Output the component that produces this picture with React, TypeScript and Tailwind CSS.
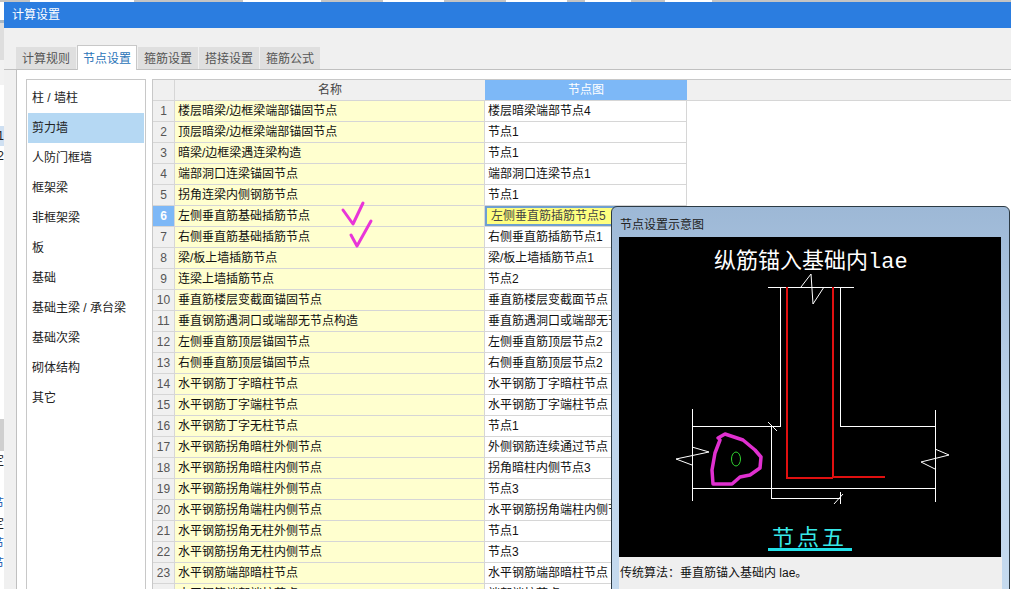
const SIDE_ITEMS = ['柱 / 墙柱', '剪力墙', '人防门框墙', '框架梁', '非框架梁', '板', '基础', '基础主梁 / 承台梁', '基础次梁', '砌体结构', '其它'];

const TABS = ['计算规则', '节点设置', '箍筋设置', '搭接设置', '箍筋公式'];

const ROWS = [
  ['楼层暗梁/边框梁端部锚固节点', '楼层暗梁端部节点4'],
  ['顶层暗梁/边框梁端部锚固节点', '节点1'],
  ['暗梁/边框梁遇连梁构造', '节点1'],
  ['端部洞口连梁锚固节点', '端部洞口连梁节点1'],
  ['拐角连梁内侧钢筋节点', '节点1'],
  ['左侧垂直筋基础插筋节点', '左侧垂直筋插筋节点5'],
  ['右侧垂直筋基础插筋节点', '右侧垂直筋插筋节点1'],
  ['梁/板上墙插筋节点', '梁/板上墙插筋节点1'],
  ['连梁上墙插筋节点', '节点2'],
  ['垂直筋楼层变截面锚固节点', '垂直筋楼层变截面节点'],
  ['垂直钢筋遇洞口或端部无节点构造', '垂直筋遇洞口或端部无节点'],
  ['左侧垂直筋顶层锚固节点', '左侧垂直筋顶层节点2'],
  ['右侧垂直筋顶层锚固节点', '右侧垂直筋顶层节点2'],
  ['水平钢筋丁字暗柱节点', '水平钢筋丁字暗柱节点'],
  ['水平钢筋丁字端柱节点', '水平钢筋丁字端柱节点'],
  ['水平钢筋丁字无柱节点', '节点1'],
  ['水平钢筋拐角暗柱外侧节点', '外侧钢筋连续通过节点'],
  ['水平钢筋拐角暗柱内侧节点', '拐角暗柱内侧节点3'],
  ['水平钢筋拐角端柱外侧节点', '节点3'],
  ['水平钢筋拐角端柱内侧节点', '水平钢筋拐角端柱内侧节点'],
  ['水平钢筋拐角无柱外侧节点', '节点1'],
  ['水平钢筋拐角无柱内侧节点', '节点3'],
  ['水平钢筋端部暗柱节点', '水平钢筋端部暗柱节点'],
  ['水平钢筋端部端柱节点', '端部端柱节点'],
];

// white construction lines of the drawing, in page coordinates
const WHITE_LINES = [
  '768,287 854,287',
  '780,287 780,426 692,426',
  '840,287 840,426 935,426',
  '692,409 692,501',
  '935,410 935,502',
  '692,488 935,488',
  '771,426 771,498 840,498',
  '840,492 840,504',
];

const WHITE_DIAGONALS = [
  '801,287 811,274 813,304 824,287',
  '768,422 777,431',
  '834,504 843,494',
  '692,447 709,452 676,459 692,465',
  '935,449 949,455 921,462 935,469',
];

function Diagram() {
  return (
    <svg viewBox="619 237 382 320" className="block w-[382px] h-[320px] bg-black shrink-0">
      <text x="714" y="268" className="fill-white text-[22px] font-['Liberation_Mono','Noto_Sans_CJK_SC',monospace]">纵筋锚入基础内lae</text>
      {WHITE_LINES.map((p) => (
        <polyline key={p} points={p} fill="none" stroke="#ffffff" strokeWidth="1" shapeRendering="crispEdges" />
      ))}
      {WHITE_DIAGONALS.map((p) => (
        <polyline key={p} points={p} fill="none" stroke="#ffffff" strokeWidth="1" />
      ))}
      <polyline points="787,287 787,478 833,478" fill="none" stroke="#e01010" strokeWidth="2" shapeRendering="crispEdges" />
      <polyline points="833,287 833,477 885,477" fill="none" stroke="#e01010" strokeWidth="2" shapeRendering="crispEdges" />
      <ellipse cx="736" cy="459" rx="4.5" ry="7" fill="none" stroke="#30d030" strokeWidth="1" />
      <path d="M718 438 L725 434 L743 440 L755 450 L761 457 L760 468 L750 475 L740 477 L732 484 L713 484 L712 470 L715 453 L720 440" fill="none" stroke="#e030d0" strokeWidth="3.5" strokeLinejoin="round" strokeLinecap="round" />
      <text x="772" y="545" letterSpacing="3" className="fill-[#38e8e8] text-[22px] font-['Noto_Sans_CJK_SC',sans-serif]">节点五</text>
      <rect x="768" y="548" width="84" height="3" fill="#20e0e8" />
    </svg>
  );
}

function NodePopup() {
  return (
    <div className="absolute left-[611px] top-[206px] w-[399px] h-[400px] rounded-t-[6px] border border-[#2c3a44] bg-gradient-to-b from-[#9db8d6] via-[#bcd3ea] to-[#c6dbef] px-[7px] flex flex-col">
      <div className="h-[30px] shrink-0 flex items-center pl-px pt-[6px] text-[#222222]">节点设置示意图</div>
      <Diagram />
      <div className="flex-1 bg-[#efefef] pl-px pt-[10px] text-[#111111]">传统算法：垂直筋锚入基础内 lae。</div>
    </div>
  );
}

function CheckMarks() {
  return (
    <svg viewBox="0 0 40 50" className="absolute left-[340px] top-[200px] w-[40px] h-[50px] pointer-events-none">
      <polyline points="3,10 13,24 23,3" fill="none" stroke="#e835d8" strokeWidth="3" strokeLinecap="round" strokeLinejoin="round" />
      <polyline points="11,35 17,46 31,21" fill="none" stroke="#e835d8" strokeWidth="3" strokeLinecap="round" strokeLinejoin="round" />
    </svg>
  );
}

function GridRow({ n, name, node }: { n: number; name: string; node: string }) {
  const active = n === 6;
  return (
    <div className="flex w-[534px] h-[21px] shrink-0 border-b border-[#d6d6d6]">
      <div className={active ? 'w-[22px] shrink-0 flex items-center justify-center bg-[#7db8f7] text-white font-bold border-r border-[#d6d6d6]' : 'w-[22px] shrink-0 flex items-center justify-center bg-[#f0f0f0] text-[#555555] border-r border-[#d6d6d6]'}>{n}</div>
      <div className="w-[310px] shrink-0 flex items-center pl-[3px] bg-[#ffffcf] text-[#111111] border-r border-[#d6d6d6] whitespace-nowrap overflow-hidden">{name}</div>
      {active ? (
        <div className="w-[202px] shrink-0 flex items-center pl-[4px] bg-[#ffff80] text-[#444444] border-2 border-[#6f9fd0] whitespace-nowrap overflow-hidden">{node}</div>
      ) : (
        <div className="w-[202px] shrink-0 flex items-center pl-[3px] bg-white text-[#111111] border-r border-[#d6d6d6] whitespace-nowrap overflow-hidden">{node}</div>
      )}
    </div>
  );
}

function BehindCell({ text, className }: { text: string; className: string }) {
  return <div className={`h-[20px] shrink-0 flex items-center justify-end whitespace-nowrap overflow-hidden ${className}`}>{text}</div>;
}

export default function App() {
  return (
    <div className="relative w-[1011px] h-[589px] overflow-hidden bg-white flex flex-col text-[12px] leading-none font-['Liberation_Sans','Noto_Sans_CJK_SC',sans-serif]">
      {/* app behind the dialog */}
      <div className="h-[2px] shrink-0 flex bg-white">
        <div className="w-[30px] bg-[#c4c4c4]" />
        <div className="w-[104px]" />
        <div className="w-[109px] bg-[#c4c4c4]" />
        <div className="w-[78px]" />
        <div className="w-[62px] bg-[#c4c4c4]" />
        <div className="w-[61px]" />
        <div className="w-[62px] bg-[#c4c4c4]" />
        <div className="w-[61px]" />
        <div className="w-[18px] bg-[#c4c4c4]" />
        <div className="w-[46px]" />
        <div className="w-[34px] bg-[#c4c4c4]" />
        <div className="w-[47px]" />
        <div className="flex-1 bg-[#c4c4c4]" />
      </div>

      <div className="flex-1 min-h-0 flex">
        <div className="w-[4px] shrink-0 flex flex-col overflow-hidden bg-white text-[#222222]">
          <div className="h-[18px] shrink-0" />
          <div className="h-[3px] shrink-0 bg-[#a9b8c6]" />
          <div className="h-[37px] shrink-0 bg-[#dedede]" />
          <div className="h-[25px] shrink-0 bg-[#f2f2f2]" />
          <div className="h-[41px] shrink-0" />
          <BehindCell text="1" className="bg-[#cfe0f2]" />
          <BehindCell text="2" className="" />
          <div className="h-[253px] shrink-0" />
          <div className="h-[32px] shrink-0 bg-[#cfcfcf]" />
          <BehindCell text="定" className="" />
          <div className="h-[23px] shrink-0" />
          <BehindCell text="节" className="text-[#2b5fb0]" />
          <BehindCell text="定" className="" />
          <BehindCell text="节" className="text-[#2b5fb0]" />
          <BehindCell text="节" className="text-[#2b5fb0]" />
        </div>

        {/* dialog */}
        <div className="flex-1 min-w-0 flex flex-col bg-[#f0f0f0]">
          <div className="h-[26px] shrink-0 flex items-center pl-[8px] bg-[#2b7de0] text-white">计算设置</div>

          <div className="h-[42px] shrink-0 flex items-end gap-px pl-[12px] border-b border-[#c0c0c0]">
            {TABS.map((t, i) => (
              <div key={t} className={i === 1 ? 'w-[60px] h-[25px] -mb-px flex items-center justify-center pt-px bg-white border border-b-0 border-[#c8c8c8] text-[#2b74b8]' : 'w-[60px] h-[22px] flex items-center justify-center pt-[2px] bg-[#dfdfdf] text-[#555555]'}>{t}</div>
            ))}
          </div>

          <div className="flex-1 min-h-0 flex pl-[12px]">
            <div className="flex-1 min-w-0 flex gap-[6px] bg-white border-l border-[#c0c0c0] pl-[9px] pt-[9px]">
              <div className="w-[120px] h-[600px] shrink-0 border border-[#c8c8c8] p-px pt-[3px] text-[#222222]">
                {SIDE_ITEMS.map((s, i) => (
                  <div key={s} className={i === 1 ? 'h-[30px] flex items-center pl-[4px] bg-[#b5d8f3]' : 'h-[30px] flex items-center pl-[4px]'}>{s}</div>
                ))}
              </div>

              <div className="flex-1 min-w-0 flex flex-col border-l border-t border-[#c8c8c8]">
                <div className="flex h-[21px] shrink-0 bg-[#f0f0f0] border-b border-[#d6d6d6]">
                  <div className="w-[22px] shrink-0 border-r border-[#d6d6d6]" />
                  <div className="w-[310px] shrink-0 flex items-center justify-center text-[#444444]">名称</div>
                  <div className="w-[202px] shrink-0 flex items-center justify-center bg-[#7db8f7] text-white">节点图</div>
                </div>
                {ROWS.map((r, i) => (
                  <GridRow key={r[0]} n={i + 1} name={r[0]} node={r[1]} />
                ))}
              </div>
            </div>
          </div>
        </div>
      </div>

      <CheckMarks />
      <NodePopup />
    </div>
  );
}
